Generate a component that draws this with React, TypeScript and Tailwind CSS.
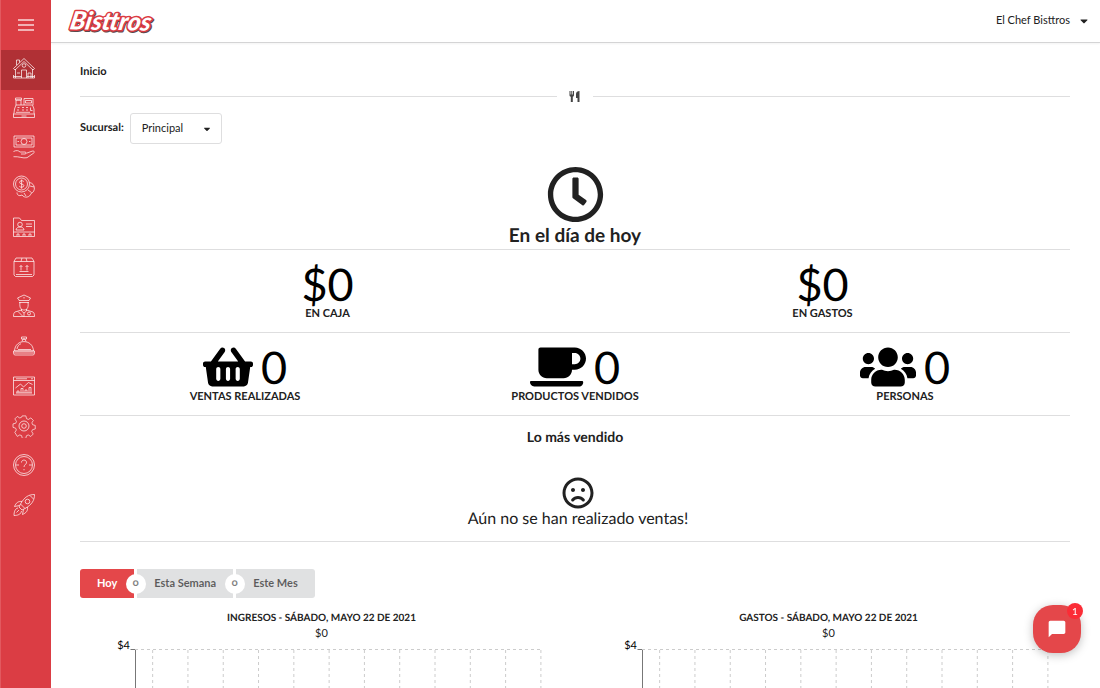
import type { ReactNode } from "react";
import {
  FaCaretDown,
  FaCoffee,
  FaRegClock,
  FaRegFrown,
  FaShoppingBasket,
  FaUsers,
} from "react-icons/fa";
import { MdChatBubble } from "react-icons/md";

const navItems: { label: string; icon: ReactNode }[] = [
  {
    label: "Inicio",
    icon: (
      <>
        <path d="M1.5 12.5 12 2.5l10.5 10-1.5 1.5L12 5.5 3 14z" />
        <path d="M3.5 13v9M20.5 13v9M1.5 19v3h21v-3M1.5 20.5h8M15 20.5h7.5" />
        <path d="M4.5 9V4h3v2.5M9.5 22v-8h5v8M16 22v-5h3v5M5 17h3" />
        <circle cx="12" cy="9.5" r="1.8" />
      </>
    ),
  },
  {
    label: "Caja",
    icon: (
      <>
        <path d="M2.5 13 4 9h16.500L22 13v4l.5 1v3.5h-21V18l.5-1zM1.5 18h21" />
        <path d="M4 9V4h5v5M3.500 2h6v2h-6zM12 9V2.500h9V9M13.500 4.500h6v2.500h-6z" />
        <path d="M5.500 11.5h2M10 11.5h2M14 11.5h2M5 14h2M10 14h2M14 14h2M4 16.3h14M18.5 11.5v3h2M9.5 20h5" />
      </>
    ),
  },
  {
    label: "Ingresos",
    icon: (
      <>
        <path d="M2 1h20v11H2zM4 3h16v7H4z" />
        <circle cx="12" cy="6.5" r="3" />
        <path d="M5.5 6.5h1.5M17 6.5h1.5" />
        <path d="M1.5 16.5c3-1.5 5-1 6.5.5h5c1.5 0 1.5 2 0 2H9M14.5 18.2l5.5-2c2-.7 3.2 1 1.5 2l-6.5 4.5c-4 1-8-1.5-13.5-1" />
      </>
    ),
  },
  {
    label: "Gastos",
    icon: (
      <>
        <circle cx="9.5" cy="9" r="8" />
        <circle cx="9.5" cy="9" r="6" />
        <path d="M11.8 6.5c-1-1.2-4.3-1-4.3.8 0 2.2 4.4 1.2 4.4 3.4 0 1.8-3.5 2-4.6.6M9.6 4.5v9.2" />
        <path d="M17.5 7.5c6 1 6.5 9 1.5 11-1 4-6.5 5-9 1.5C7 21.5 5 20 5 17.5M12 18l2 3M16 15l3.5 2.5M18 11l4 1" />
      </>
    ),
  },
  {
    label: "Clientes",
    icon: (
      <>
        <path d="M1.5 21.5V3h6l2 2.5h13v16zM1.5 17h21" />
        <circle cx="8" cy="9.5" r="2.3" />
        <path d="M4 15c0-4 8-4 8 0zM14 9h6M14 11.5h6M5 21v-2h2v2M11 21v-2h2v2M17 21v-2h2v2" />
      </>
    ),
  },
  {
    label: "Inventario",
    icon: (
      <>
        <path d="M2 6.5 4 3h16l2 3.5V20l-1.5 1.5h-17L2 20zM2 6.5h20M9 6.5 10 3M15 6.5 14 3" />
        <path d="M9 15.5v-5M7.5 12 9 10.5l1.5 1.5M15 15.5v-5M13.5 12 15 10.5l1.5 1.5M7.5 16.5h9M4 19.5h16" />
      </>
    ),
  },
  {
    label: "Personal",
    icon: (
      <>
        <path d="M7 6 5.5 4 12 1l6.5 3L17 6.5H7zM7 8.5h10M8 8c-1 7 2 8 4 8s5-1 4-8" />
        <path d="M9.5 15v2L12 19l2.5-2v-2M9.5 16 3 18c-1 .5-1.5 2-1.5 4.5h21c0-2.5-.5-4-1.5-4.5l-6.5-2M6 17.5l5 5M12 19v3.5" />
        <circle cx="17" cy="19.5" r="1.5" />
        <path d="M12 3v1.5" />
      </>
    ),
  },
  {
    label: "Platillos",
    icon: (
      <>
        <path d="M2.5 17C3 4.5 21 4.5 21.5 17zM1.5 17h21v2.5l-1 1.5h-19l-1-1.5z" />
        <path d="M10 7.5 11 5h2l1 2.5M9.5 3h5v2h-5zM5 15c.5-3 2-4.5 4-5.3M2 19h20M6 15.5h13" />
      </>
    ),
  },
  {
    label: "Reportes",
    icon: (
      <>
        <path d="M1.5 3h21v18h-21zM1.5 6.5h21M4 4.8h11M19 4.8h2" />
        <path d="m3.5 14 5-4 3 3 5-4.5 4 2" />
        <path d="M4 19h16M5 19v-2h2v2M9 19v-4.5h2V19M13 19v-3h2v3M17 19v-5.5h2V19" />
      </>
    ),
  },
  {
    label: "Configuración",
    icon: (
      <>
        <path
          d="M10 1.5h4l.7 3 2 .9 2.7-1.7 2.7 2.7-1.6 2.7.8 2 2.9.8v3.8l-3 .8-.9 2 1.7 2.7-2.7 2.7-2.7-1.7-2 .9-.7 2.9h-3.8l-.7-3-2-.8-2.7 1.6L2 19.5l1.7-2.7-.9-2L0 14V10.2l3-.7.8-2L2 4.8l2.7-2.7 2.7 1.7 2-.9z"
          transform="translate(1 .5) scale(.92)"
        />
        <circle cx="12" cy="12" r="5" />
        <circle cx="12" cy="12" r="2.3" />
      </>
    ),
  },
  {
    label: "Ayuda",
    icon: (
      <>
        <circle cx="12" cy="12" r="10.5" />
        <circle cx="12" cy="12" r="8.5" />
        <path d="M9.5 9.5c0-3.5 5.5-3 5 .3-.3 1.8-2.5 2-2.5 4.2M12 16v1.3M4 12h3M17 12h3" />
      </>
    ),
  },
  {
    label: "Novedades",
    icon: (
      <>
        <path d="M22.5 1.5c-6 0-10 2.5-14 9.5l4.5 4.5c7-4 9.5-8 9.5-14zM18 2.5l3.5 3.5" />
        <circle cx="15.5" cy="8.5" r="2.3" />
        <path d="M10 8.5c-4-.5-6 1.5-7.5 5l5-1M15.5 14c.5 4-1.5 6-5 7.5l1-5M8.5 11l-1.5 3 3 3 3-1.5" />
        <path d="M6 15c-3 .5-4 4-4 7.5 3.5 0 7-1 7.5-4.5M7 17l-2.5 2.5" />
      </>
    ),
  },
];

const Sidebar = () => {
  return (
    <aside className="w-[51px] shrink-0 bg-[#db3d44] border-l border-[#e2595f]">
      <button
        type="button"
        aria-label="Menú"
        className="flex h-[50px] w-full items-center justify-center text-white/80"
      >
        <svg width="16" height="12" stroke="currentColor" strokeWidth="1.5">
          <path d="M0 1h16M0 6h16M0 11h16" />
        </svg>
      </button>
      <nav className="grid h-[477px] auto-rows-fr">
        {navItems.map((item, i) => (
          <a
            key={item.label}
            href="#"
            aria-label={item.label}
            className={`flex items-center justify-center pr-1 pb-1 text-white/70 ${
              i === 0 ? "bg-[#b03035]" : ""
            }`}
          >
            <svg
              width="24"
              height="24"
              viewBox="0 0 24 24"
              fill="none"
              stroke="currentColor"
              strokeWidth="1"
              strokeLinejoin="round"
            >
              {item.icon}
            </svg>
          </a>
        ))}
      </nav>
    </aside>
  );
};

const Logo = () => {
  return (
    <svg width="100" height="36" viewBox="0 0 100 36" role="img" aria-label="Bisttros">
      <g
        fontFamily="Lato, sans-serif"
        fontWeight="900"
        fontStyle="italic"
        fontSize="25"
        strokeLinejoin="round"
        transform="rotate(1 45 18) skewX(-10)"
      >
        <text x="8" y="28" fill="#5b4a4c" stroke="#5b4a4c" strokeWidth="3">
          Bisttros
        </text>
        <text
          x="7"
          y="27"
          fill="#fff"
          stroke="#dc3a42"
          strokeWidth="3"
          paintOrder="stroke"
          aria-hidden="true"
        >
          Bisttros
        </text>
      </g>
    </svg>
  );
};

const Header = () => {
  return (
    <header className="flex h-[43px] items-center justify-between border-b border-[#d4d4d5] pr-[10px] pb-px pl-4 shadow-xs">
      <a href="#">
        <Logo />
      </a>
      <button type="button" className="flex items-center gap-2 text-[11px]">
        El Chef Bisttros
        <FaCaretDown size={12} />
      </button>
    </header>
  );
};

const Stat = ({
  value,
  label,
  icon,
}: {
  value: string;
  label: string;
  icon?: ReactNode;
}) => {
  return (
    <div className="flex flex-col items-center">
      <div className="flex h-[46px] items-center gap-2 text-[45px]/[46px] text-black">
        {icon}
        {value}
      </div>
      <div className="text-[11px]/[14px] font-bold">{label}</div>
    </div>
  );
};

const Chart = ({ title }: { title: string }) => {
  const bands = Array.from({ length: 12 }, (_, i) => i);

  return (
    <section>
      <h3 className="text-center text-[10px]/[15px] font-bold">{title}</h3>
      <p className="text-center text-[11px]/[15px]">$0</p>
      <div className="flex pr-[23px]">
        <div className="w-[50px] text-right text-[11px]/[10px] text-black">$4</div>
        <svg className="h-[200px] min-w-0 flex-1 overflow-visible" aria-hidden="true">
          <path d="M1 8h5v192" fill="none" stroke="#777" transform="translate(-.5 .5)" />
          <svg x="5" y="0" width="99%" height="200" overflow="visible">
            <g stroke="#ccc" strokeDasharray="3 3">
              <line x1="0" x2="100%" y1="8.5" y2="8.5" />
              {bands.map((i) => (
                <line
                  key={i}
                  x1={`${((i + 0.5) / 11.5) * 100}%`}
                  x2={`${((i + 0.5) / 11.5) * 100}%`}
                  y1="9"
                  y2="200"
                />
              ))}
            </g>
          </svg>
        </svg>
      </div>
    </section>
  );
};

const Or = () => {
  return (
    <span className="relative z-10 w-[3px]">
      <span className="absolute top-1/2 left-1/2 flex size-5 -translate-1/2 items-center justify-center rounded-full bg-white text-[11px] font-bold text-black/50">
        o
      </span>
    </span>
  );
};

const App = () => {
  return (
    <div className="flex h-screen overflow-hidden bg-white font-[Lato,sans-serif] text-[#212121] [text-rendering:geometricPrecision]">
      <Sidebar />
      <div className="min-w-0 flex-1">
        <Header />
        <main className="pr-[30px] pl-[29px]">
          <h1 className="pt-5 text-[11px]/[18px] font-bold">Inicio</h1>
          <div className="mt-2 flex items-center gap-3">
            <hr className="flex-1 border-[#dededf]" />
            <svg width="12" height="15" viewBox="0 0 12 15" fill="#444" aria-hidden="true">
              <path d="M.5 2h1v3.5h.8V2h1v3.5H4V2h1v4c0 1-.5 1.6-1.200 1.8V13H1.8V7.8C1 7.6.5 7 .5 6zM10.5 2v11h-2V9H7V5c0-1.8 1.5-3 3.500-3z" />
            </svg>
            <hr className="flex-1 border-[#dededf]" />
          </div>

          <div className="mt-[9px] flex items-center gap-1.5">
            <label htmlFor="sucursal" className="text-[11px] font-bold">
              Sucursal:
            </label>
            <div className="relative">
              <select
                id="sucursal"
                className="h-[31px] w-[92px] appearance-none rounded-[3px] border border-[#dededf] bg-white pl-[11px] text-[11px]"
              >
                <option>Principal</option>
              </select>
              <FaCaretDown
                size={10}
                className="pointer-events-none absolute top-1/2 right-2.5 -translate-y-1/2"
              />
            </div>
          </div>

          <section className="mt-[22px] flex flex-col items-center border-b border-[#dededf] pb-px">
            <FaRegClock size={57} />
            <h2 className="text-[19px]/[25px] font-bold">En el día de hoy</h2>
          </section>

          <section className="grid grid-cols-2 border-b border-[#dededf] pt-[11px] pb-[11px]">
            <Stat value="$0" label="EN CAJA" />
            <Stat value="$0" label="EN GASTOS" />
          </section>

          <section className="grid grid-cols-3 border-b border-[#dededf] pt-[11px] pb-[11px]">
            <Stat value="0" label="VENTAS REALIZADAS" icon={<FaShoppingBasket size={50} />} />
            <Stat value="0" label="PRODUCTOS VENDIDOS" icon={<FaCoffee size={56} />} />
            <Stat value="0" label="PERSONAS" icon={<FaUsers size={56} />} />
          </section>

          <section className="border-b border-[#dededf] py-3">
            <h3 className="text-center text-[14px]/[18px] font-bold">Lo más vendido</h3>
            <div className="mt-[31px] flex flex-col items-center pl-1.5">
              <FaRegFrown size={32} />
              <p className="text-[16px]/[20px]">Aún no se han realizado ventas!</p>
            </div>
          </section>

          <div className="mt-[27px] flex h-[29px] text-[11px] font-bold text-black/60">
            <button type="button" className="rounded-l-[3px] bg-[#e4474a] px-[17px] text-white">
              Hoy
            </button>
            <Or />
            <button type="button" className="bg-[#e0e1e2] px-[17px]">
              Esta Semana
            </button>
            <Or />
            <button type="button" className="rounded-r-[3px] bg-[#e0e1e2] px-[17px]">
              Este Mes
            </button>
          </div>

          <div className="mt-[13px] grid grid-cols-2 gap-6">
            <Chart title="INGRESOS - SÁBADO, MAYO 22 DE 2021" />
            <Chart title="GASTOS - SÁBADO, MAYO 22 DE 2021" />
          </div>
        </main>
      </div>

      <button
        type="button"
        aria-label="Abrir chat"
        className="fixed right-[19px] bottom-[35px] flex size-12 items-center justify-center rounded-[20px] bg-[#e4474a] text-white shadow-[0_2px_10px_rgba(0,0,0,0.25)]"
      >
        <MdChatBubble size={20} />
        <span className="absolute -top-[2px] -right-[2px] flex size-4 items-center justify-center rounded-full bg-[#fb2c36] text-[10px]">
          1
        </span>
      </button>
    </div>
  );
};

export default App;
